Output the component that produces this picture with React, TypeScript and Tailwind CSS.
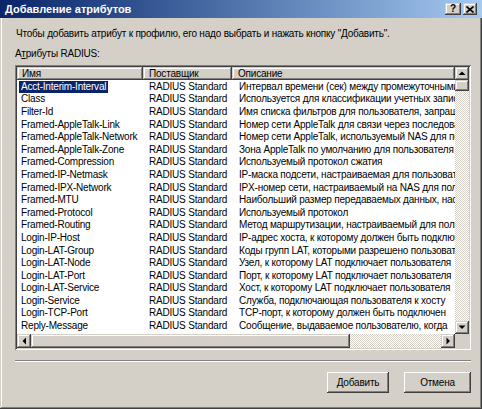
import React from 'react';

const rows: [string, string][] = [
  ['Acct-Interim-Interval', 'Интервал времени (сек) между промежуточными обновлениями'],
  ['Class', 'Используется для классификации учетных записей'],
  ['Filter-Id', 'Имя списка фильтров для пользователя, запрашивающего'],
  ['Framed-AppleTalk-Link', 'Номер сети AppleTalk для связи через последовательный канал'],
  ['Framed-AppleTalk-Network', 'Номер сети AppleTalk, используемый NAS для пользователя'],
  ['Framed-AppleTalk-Zone', 'Зона AppleTalk по умолчанию для пользователя'],
  ['Framed-Compression', 'Используемый протокол сжатия'],
  ['Framed-IP-Netmask', 'IP-маска подсети, настраиваемая для пользователя'],
  ['Framed-IPX-Network', 'IPX-номер сети, настраиваемый на NAS для пользователя'],
  ['Framed-MTU', 'Наибольший размер передаваемых данных, настраиваемый'],
  ['Framed-Protocol', 'Используемый протокол'],
  ['Framed-Routing', 'Метод маршрутизации, настраиваемый для пользователя'],
  ['Login-IP-Host', 'IP-адрес хоста, к которому должен быть подключен'],
  ['Login-LAT-Group', 'Коды групп LAT, которыми разрешено пользоваться'],
  ['Login-LAT-Node', 'Узел, к которому LAT подключает пользователя'],
  ['Login-LAT-Port', 'Порт, к которому LAT подключает пользователя'],
  ['Login-LAT-Service', 'Хост, к которому LAT подключает пользователя'],
  ['Login-Service', 'Служба, подключающая пользователя к хосту'],
  ['Login-TCP-Port', 'TCP-порт, к которому должен быть подключен'],
  ['Reply-Message', 'Сообщение, выдаваемое пользователю, когда'],
];

const raised =
  'shadow-[inset_-1px_-1px_#404040,inset_1px_1px_#d4d0c8,inset_-2px_-2px_#808080,inset_2px_2px_#ffffff] bg-[#d4d0c8]';
const checker =
  '[background-image:repeating-conic-gradient(#ffffff_0%_25%,#d4d0c8_0%_50%)] [background-size:2px_2px]';

function Arrow({ dir }: { dir: 'up' | 'down' | 'left' | 'right' }) {
  const pts: Record<string, string> = {
    up: '0.5,4 7.5,4 4,0.5',
    down: '0.5,0.5 7.5,0.5 4,4',
    left: '4,0.5 4,7.5 0.5,4',
    right: '0.5,0.5 0.5,7.5 4,4',
  };
  const horiz = dir === 'left' || dir === 'right';
  return (
    <svg width={horiz ? 5 : 8} height={horiz ? 8 : 5} viewBox={horiz ? '0 0 5 8' : '0 0 8 5'}>
      <polygon points={pts[dir]} fill="#000" />
    </svg>
  );
}

function SBtn({ dir, className = '' }: { dir: 'up' | 'down' | 'left' | 'right'; className?: string }) {
  return (
    <div className={`${raised} flex items-center justify-center shrink-0 ${className}`}>
      <Arrow dir={dir} />
    </div>
  );
}

export default function App() {
  return (
    <div className="w-[482px] h-[409px] bg-[#d4d0c8] flex flex-col font-['Liberation_Sans',Arial,sans-serif] text-[10px] text-black shadow-[inset_-1px_-1px_#404040,inset_1px_0_#d4d0c8,inset_-2px_-2px_#808080,inset_2px_0_#ffffff] overflow-hidden">
      <div className="h-[18px] shrink-0 flex items-center bg-linear-to-r from-[#0a246a] to-[#a6caf0]">
        <span className="ml-[5px] text-white font-bold text-[11px] leading-[18px]">Добавление атрибутов</span>
        <div className="ml-auto mr-[5px] flex gap-[2px]">
          <div className={`${raised} w-[16px] h-[12px] flex items-center justify-center text-[10px] font-bold leading-none`}>?</div>
          <div className={`${raised} w-[14px] h-[12px] flex items-center justify-center`}>
            <svg width="8" height="7" viewBox="0 0 8 7">
              <path d="M0.5 0.5 L7.5 6.5 M7.5 0.5 L0.5 6.5" stroke="#000" strokeWidth="1.6" />
            </svg>
          </div>
        </div>
      </div>

      <div className="pl-[15px] pr-[11px] flex flex-col tracking-[-0.2px]">
        <div className="mt-[10px] h-[12px] leading-[12px] pl-[1px] whitespace-nowrap">
          Чтобы добавить атрибут к профилю, его надо выбрать и нажать кнопку "Добавить".
        </div>
        <div className="mt-[8px] h-[12px] leading-[12px]">
          А<span className="underline underline-offset-1">т</span>рибуты RADIUS:
        </div>

        <div className="mt-[5px] h-[285px] p-[2px] flex flex-col shadow-[inset_1px_1px_#808080,inset_-1px_-1px_#ffffff,inset_2px_2px_#404040,inset_-2px_-2px_#d4d0c8]">
          <div className="flex h-[267px] shrink-0">
            <div className="w-[438px] bg-white flex flex-col overflow-hidden">
              <div className="flex h-[13px] shrink-0 leading-[13px]">
                <div className={`${raised} w-[126px] shrink-0 pl-[5px]`}>Имя</div>
                <div className={`${raised} w-[89px] shrink-0 pl-[6px]`}>Поставщик</div>
                <div className={`${raised} w-[223px] shrink-0 pl-[6px]`}>Описание</div>
              </div>
              {rows.map(([name, desc], i) => (
                <div key={name} className="flex h-[12.6px] shrink-0 items-center whitespace-nowrap">
                  <div className="w-[126px] shrink-0 pl-[2px]">
                    <span className={`px-[2px] inline-block leading-[12px] ${i === 0 ? 'bg-[#0a246a] text-white' : ''}`}>{name}</span>
                  </div>
                  <div className="w-[89px] shrink-0 pl-[6px]">RADIUS Standard</div>
                  <div className="w-[223px] shrink-0 pl-[7px] overflow-hidden">{desc}</div>
                </div>
              ))}
            </div>
            <div className="w-[14px] flex flex-col">
              <SBtn dir="up" className="h-[13px]" />
              <div className={`${raised} h-[11px] shrink-0`} />
              <div className={`flex-1 ${checker}`} />
              <SBtn dir="down" className="h-[13px]" />
            </div>
          </div>
          <div className="flex h-[14px] shrink-0">
            <SBtn dir="left" className="w-[14px]" />
            <div className={`${raised} w-[319px] shrink-0`} />
            <div className={`flex-1 ${checker}`} />
            <SBtn dir="right" className="w-[14px]" />
            <div className="w-[14px] bg-[#d4d0c8] shrink-0" />
          </div>
        </div>

        <div className="mt-[10px] h-[2px] border-t border-t-[#808080] border-b border-b-[#ffffff]" />

        <div className="mt-[10px] flex justify-end gap-[15px]">
          <div className="w-[62px] h-[21px] flex items-center justify-center shadow-[inset_-1px_-1px_#404040,inset_1px_1px_#ffffff,inset_-2px_-2px_#808080] bg-[#d4d0c8]">
            Добавить
          </div>
          <div className="w-[67px] h-[21px] flex items-center justify-center shadow-[inset_-1px_-1px_#404040,inset_1px_1px_#ffffff,inset_-2px_-2px_#808080] bg-[#d4d0c8]">
            Отмена
          </div>
        </div>
      </div>
    </div>
  );
}
